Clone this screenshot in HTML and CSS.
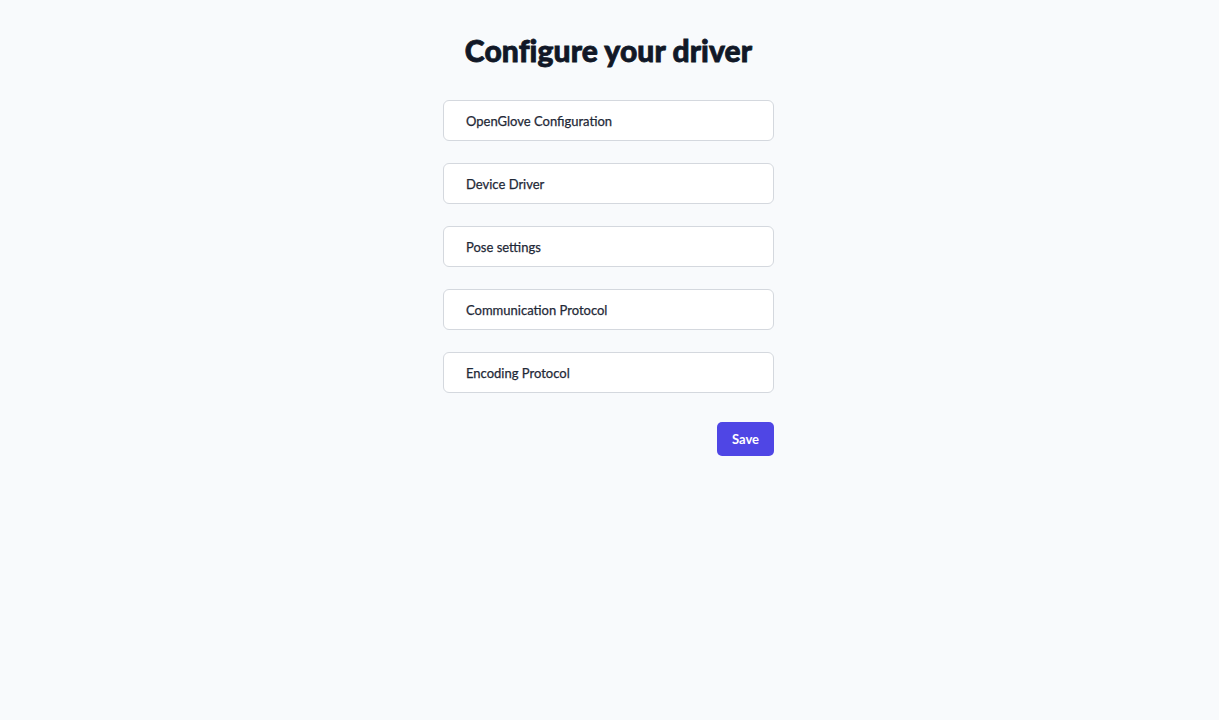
FILE: index.html
```html
<!DOCTYPE html>
<html lang="en">
<head>
<meta charset="utf-8">
<title>Configure your driver</title>
<link rel="stylesheet" href="styles.css">
</head>
<body>
<main class="page">
  <h1 class="title">Configure your driver</h1>
  <div class="list">
    <div class="item">OpenGlove Configuration</div>
    <div class="item">Device Driver</div>
    <div class="item">Pose settings</div>
    <div class="item">Communication Protocol</div>
    <div class="item">Encoding Protocol</div>
  </div>
  <div class="actions">
    <button class="save">Save</button>
  </div>
</main>
</body>
</html>
```

FILE: styles.css
```css
html, body {
  margin: 0;
  padding: 0;
  background: #f8fafc;
  font-family: "Lato", "Noto Sans", sans-serif;
  color: #111827;
}
.page {
  width: 331px;
  margin: 0 auto;
  padding-top: 30px;
  padding-right: 2px;
  display: flex;
  flex-direction: column;
}
.title {
  margin: 0;
  text-align: center;
  font-family: "Lato", "Noto Sans", sans-serif;
  font-size: 30px;
  font-weight: 900;
  line-height: 40px;
  color: #111827;
  letter-spacing: 0.1px;
  -webkit-text-stroke: 0.8px #111827;
  white-space: nowrap;
}
.list {
  margin-top: 30px;
  display: flex;
  flex-direction: column;
  gap: 22px;
}
.item {
  height: 41px;
  box-sizing: border-box;
  border: 1px solid #d4d8de;
  border-radius: 6px;
  background: #ffffff;
  padding: 0 22px;
  display: flex;
  align-items: center;
  font-family: "Lato", "Noto Sans", sans-serif;
  font-size: 13px;
  font-weight: 400;
  color: #1f2937;
  -webkit-text-stroke: 0.25px #1f2937;
}
.actions {
  margin-top: 29px;
  display: flex;
  justify-content: flex-end;
}
.save {
  width: 57px;
  height: 34px;
  border: none;
  border-radius: 5px;
  background: #4f46e5;
  color: #ffffff;
  font-family: "Lato", "Noto Sans", sans-serif;
  font-size: 13px;
  font-weight: 700;
  padding: 0;
  cursor: pointer;
}
```
